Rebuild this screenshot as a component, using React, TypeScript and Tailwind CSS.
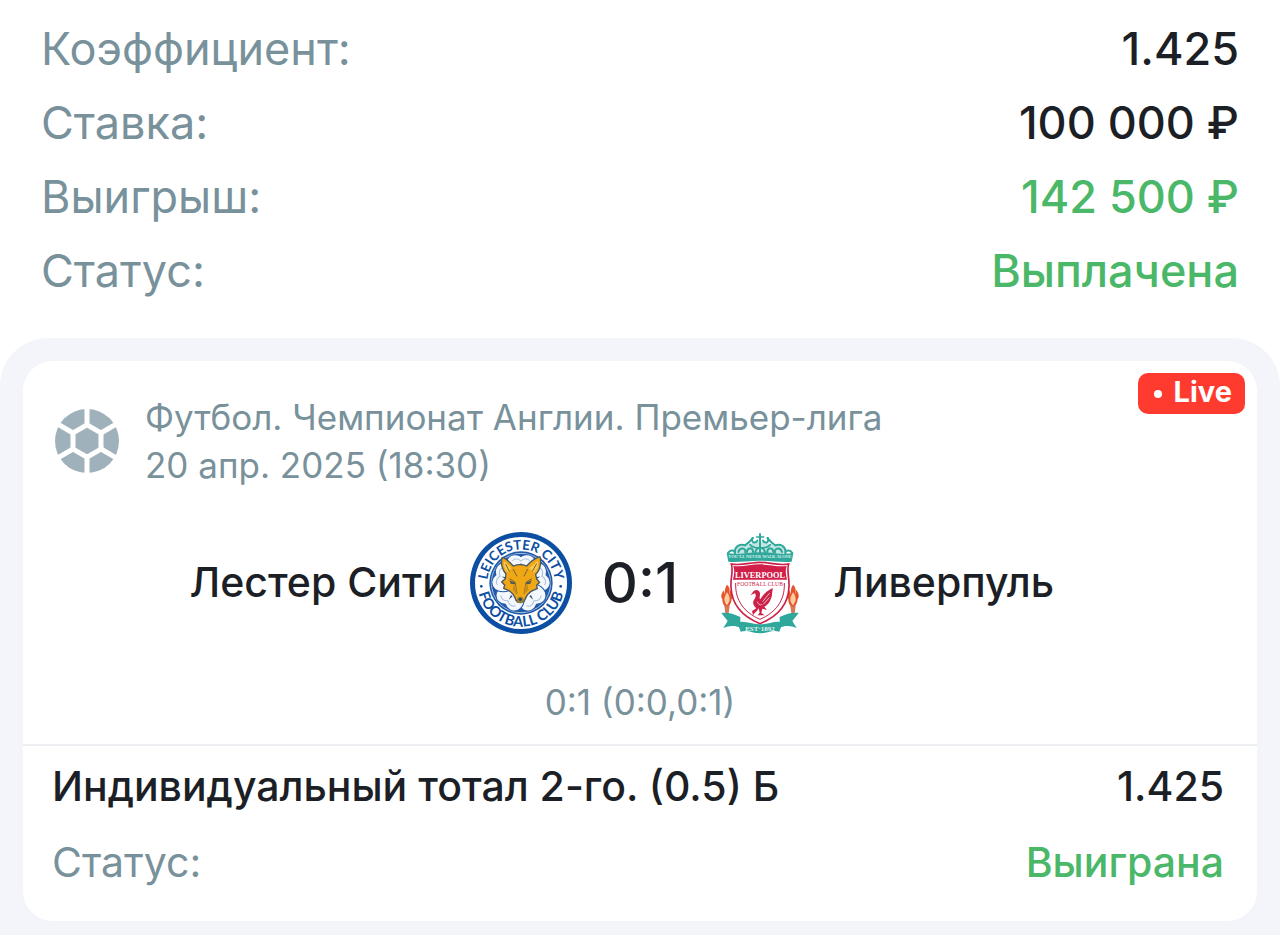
import clsx from "clsx";

const summary = [
  { label: "Коэффициент:", value: "1.425", isGreen: false },
  { label: "Ставка:", value: "100 000 ₽", isGreen: false },
  { label: "Выигрыш:", value: "142 500 ₽", isGreen: true },
  { label: "Статус:", value: "Выплачена", isGreen: true },
];

function BallIcon() {
  return (
    <svg viewBox="0 0 64 64" className="size-16 shrink-0" aria-hidden="true">
      <circle cx="32" cy="32" r="32" fill="#9fb1ba" />
      <g fill="none" stroke="#fff" strokeWidth="5">
        <path d="M32 15.8 46 23.9V40.1L32 48.2 18 40.1V23.9Z" />
        <path d="M32 16V-2M32 48V66M46 24 62 14.7M46 40 62 49.3M18 24 2 14.7M18 40 2 49.3" />
      </g>
    </svg>
  );
}

function LeicesterCrest() {
  return (
    <svg
      viewBox="-153 -153 306 306"
      className="size-[102px] shrink-0"
      role="img"
      aria-label="Лестер Сити"
    >
      <defs>
        <path id="arc-top" d="M-101 0A101 101 0 0 1 101 0" />
        <path id="arc-bottom" d="M-131 0A131 131 0 0 0 131 0" />
      </defs>
      <circle r="153" fill="#0b4ea2" />
      <circle r="138" fill="#fff" />
      <circle r="95" fill="#2059a8" />
      <circle r="89" fill="none" stroke="#a9c0df" strokeWidth="3" />
      {[0, 72, 144, 216, 288].map((angle) => (
        <g key={angle} transform={`rotate(${angle})`}>
          <path
            d="M0 0C-30-18-50-42-42-68C-34-88-12-88 0-79C12-88 34-88 42-68C50-42 30-18 0 0Z"
            fill="#f4f8fd"
            stroke="#2059a8"
            strokeWidth="3"
          />
          <path
            d="M-27-65C-20-76-8-73 0-66C8-73 20-76 27-65"
            fill="none"
            stroke="#a9c0df"
            strokeWidth="3"
          />
          <path d="M-3-47 0-62 3-47Z" fill="#2d4b78" />
        </g>
      ))}
      {/* fox head */}
      <path
        d="M-56-77C-45-74-33-62-23-51C-10-56 5-56 17-51C27-63 43-74 57-79C62-62 57-36 44-26L47-12 56-2 47 7 49 17 36 22C22 28 17 36 11 52C5 61-10 61-15 52C-20 36-26 28-38 22L-52 16-49 6-58-3-47-13-45-27C-57-40-62-60-56-77Z"
        fill="#efa716"
        stroke="#465665"
        strokeWidth="4"
        strokeLinejoin="round"
      />
      <path d="M-50-65-28-44-42-32C-51-44-53-56-50-65Z" fill="#f8c94e" />
      <path d="M51-67 24-44 40-31C50-43 54-55 51-67Z" fill="#f8c94e" />
      <path
        d="M-46-57-35-35M47-58 34-35M-35-13-18-3-12 32M33-13 16-3 9 32M-24-42-12-20M20-42 9-20"
        fill="none"
        stroke="#76652d"
        strokeWidth="3"
      />
      <path d="M-35-8-16 0-21 4-31 2ZM32-8 13 0 18 4 28 2Z" fill="#4d5a55" />
      <path d="M-22 5-14 8-12 35-25 20ZM19 5 11 8 9 35 22 20Z" fill="#c68c1d" />
      <circle cx="-2" cy="51" r="10" fill="#9c802d" />
      <circle cx="-2" cy="49" r="5" fill="#23435f" />
      <g
        fill="#0b4ea2"
        fontWeight="700"
        fontFamily="Lato, sans-serif"
        textAnchor="middle"
      >
        <text fontSize="40">
          <textPath href="#arc-top" startOffset="50%">
            LEICESTER CITY
          </textPath>
        </text>
        <text fontSize="44">
          <textPath href="#arc-bottom" startOffset="50%">
            FOOTBALL CLUB
          </textPath>
        </text>
      </g>
      <circle cx="-119" cy="10" r="4" fill="#0b4ea2" />
      <circle cx="119" cy="10" r="4" fill="#0b4ea2" />
    </svg>
  );
}

function LiverpoolCrest() {
  return (
    <svg
      viewBox="-6 30 306 306"
      className="size-[102px] shrink-0"
      role="img"
      aria-label="Ливерпуль"
    >
      {/* gates */}
      <path
        d="M70 94C72 78 90 68 106 72C120 66 128 60 150 60C172 60 180 66 194 72C210 68 228 78 230 94Z"
        fill="#c3e6e2"
      />
      <g fill="none" stroke="#2fa79b" strokeWidth="6" strokeLinecap="round">
        <path d="M54 93C62 80 76 86 75 94M75 94C72 72 92 65 105 70C118 62 124 54 128 48M247 93C239 80 225 86 226 94M226 94C229 72 209 65 196 70C183 62 178 54 173 48" />
        <path d="M128 48C121 62 136 66 142 56M173 48C180 62 165 66 159 56M150 36V92M136 94C136 72 165 72 165 94" />
        <path d="M85 90C90 74 108 78 106 91M216 90C211 74 193 78 195 91M111 90C111 76 130 75 129 90M190 90C190 76 171 75 172 90" />
        <path d="M140 45H161M120 68C132 82 168 82 181 68" strokeWidth="5" />
      </g>
      <path
        d="M50 93C80 99 115 91 150 91C185 91 220 99 250 93L245 119C216 122 188 116 150 116C112 116 84 122 55 119Z"
        fill="#2fa79b"
      />
      <text
        x="150"
        y="109"
        textAnchor="middle"
        fontSize="13"
        fontWeight="700"
        fontFamily="Liberation Serif, serif"
        fill="#d9f1ee"
      >
        YOU’LL NEVER WALK ALONE
      </text>
      {/* flames */}
      {[51, 249].map((x) => (
        <g key={x} transform={`translate(${x} 226)`}>
          <path
            d="M0-38C16-22 1-17 12-4C17 8 10 22 5 28H-5C-12 21-17 8-12-5C-3-14-10-24 0-38Z"
            fill="#e7532d"
          />
          <path d="M-10-21C-19-8-18 0-14 6L-6 2ZM9-23C20-10 18 0 14 6L7 2Z" fill="#e7532d" />
          <path d="M0-15C13 2 8 14 0 24C-10 13-11 3 0-15Z" fill="#f9cfa0" />
          <path d="M-8 26H8L5 48H-5Z" fill="#d77755" />
        </g>
      ))}
      {/* ribbon behind the shield */}
      <path
        d="M34 273C54 270 75 277 91 285L91 318C76 309 56 311 40 318L53 297ZM266 273C246 270 225 277 209 285L209 318C224 309 244 311 260 318L247 297Z"
        fill="#2fa79b"
      />
      <path
        d="M64 126C95 132 122 121 150 121C178 121 205 132 236 126C229 146 239 167 237 195C235 246 204 283 150 305C96 283 65 246 63 195C61 167 71 146 64 126Z"
        fill="#fff"
        stroke="#cc2149"
        strokeWidth="5"
      />
      <path
        d="M77 183C75 235 102 271 150 292C198 271 225 235 223 183"
        fill="none"
        stroke="#cc2149"
        strokeWidth="3"
      />
      <path
        d="M70 132C96 136 122 127 150 127C178 127 204 136 230 132C225 146 228 159 231 173H69C72 159 75 146 70 132Z"
        fill="#d01f49"
      />
      <text
        x="150"
        y="168"
        textAnchor="middle"
        fontSize="25"
        fontWeight="700"
        fontFamily="Liberation Serif, serif"
        fill="#fff"
      >
        LIVERPOOL
      </text>
      <text
        x="150"
        y="192"
        textAnchor="middle"
        fontSize="17"
        fontFamily="Liberation Serif, serif"
        fill="#cc2149"
      >
        FOOTBALL CLUB
      </text>
      {/* liver bird */}
      <path
        d="M126 214C132 201 145 201 149 211C153 220 145 228 151 232C158 219 170 206 189 198C185 211 188 221 182 232C179 243 171 250 163 254L171 264 157 260 154 273 164 280H143L149 272 146 259C143 267 134 271 129 280L126 267 139 259C130 251 126 241 133 232C139 224 138 216 134 214L121 220Z"
        fill="#cc2149"
      />
      <path
        d="M158 239 179 213M160 247 178 227M142 239C143 246 150 250 156 248"
        fill="none"
        stroke="#fff"
        strokeWidth="2"
      />
      <path
        d="M82 301C105 294 126 307 150 307C174 307 195 294 218 301L208 329C185 322 173 334 150 334C127 334 115 322 92 329Z"
        fill="#2fa79b"
      />
      <text
        x="150"
        y="328"
        textAnchor="middle"
        fontSize="21"
        fontWeight="700"
        fontFamily="Liberation Serif, serif"
        fill="#e4f5f3"
      >
        EST·1892
      </text>
    </svg>
  );
}

export default function App() {
  return (
    <main className="bg-white font-['Inter','Liberation_Sans',sans-serif] text-[#1c1f26]">
      <dl className="px-[41px] pt-3 pb-[30px] text-[45px] leading-[74px]">
        {summary.map(({ label, value, isGreen }) => (
          <div key={label} className="flex items-center justify-between">
            <dt className="text-[#78919b]">{label}</dt>
            <dd className={clsx("font-medium", isGreen && "text-[#4bb768]")}>
              {value}
            </dd>
          </div>
        ))}
      </dl>

      <section className="rounded-t-[48px] bg-[#f4f5fa] px-[23px] pt-[23px] pb-[14px]">
        <article className="relative rounded-[30px] bg-white pt-8 pb-[21px]">
          <span className="absolute top-3 right-3 flex h-[41px] items-center gap-3 rounded-[10px] bg-[#ff3b30] pr-[13px] pl-4 text-[29px] font-bold text-white">
            <i className="size-2 rounded-full bg-white" />
            <span className="pb-1 leading-9">Live</span>
          </span>

          <header className="flex items-center gap-[26px] px-8 text-[35px] leading-[48px] text-[#78919b]">
            <BallIcon />
            <div>
              <p>Футбол. Чемпионат Англии. Премьер-лига</p>
              <p>20 апр. 2025 (18:30)</p>
            </div>
          </header>

          <div className="mt-[43px] grid grid-cols-[1fr_auto_1fr] items-center gap-[23px] text-[41px] font-medium">
            <p className="text-right">Лестер Сити</p>
            <div className="flex items-center gap-[30px]">
              <LeicesterCrest />
              <p className="text-[56px] leading-none">0:1</p>
              <LiverpoolCrest />
            </div>
            <p>Ливерпуль</p>
          </div>

          <p className="mt-11 text-center text-[35px] leading-[48px] text-[#78919b]">
            0:1 (0:0,0:1)
          </p>

          <div className="mt-[18px] border-t-2 border-[#eceef1] pt-0.5 pr-[33px] pl-[29px] text-[41px] leading-[76px]">
            <div className="flex justify-between font-medium">
              <h2>Индивидуальный тотал 2-го. (0.5) Б</h2>
              <p>1.425</p>
            </div>
            <div className="flex justify-between">
              <p className="text-[#78919b]">Статус:</p>
              <p className="font-medium text-[#4bb768]">Выиграна</p>
            </div>
          </div>
        </article>
      </section>
    </main>
  );
}
